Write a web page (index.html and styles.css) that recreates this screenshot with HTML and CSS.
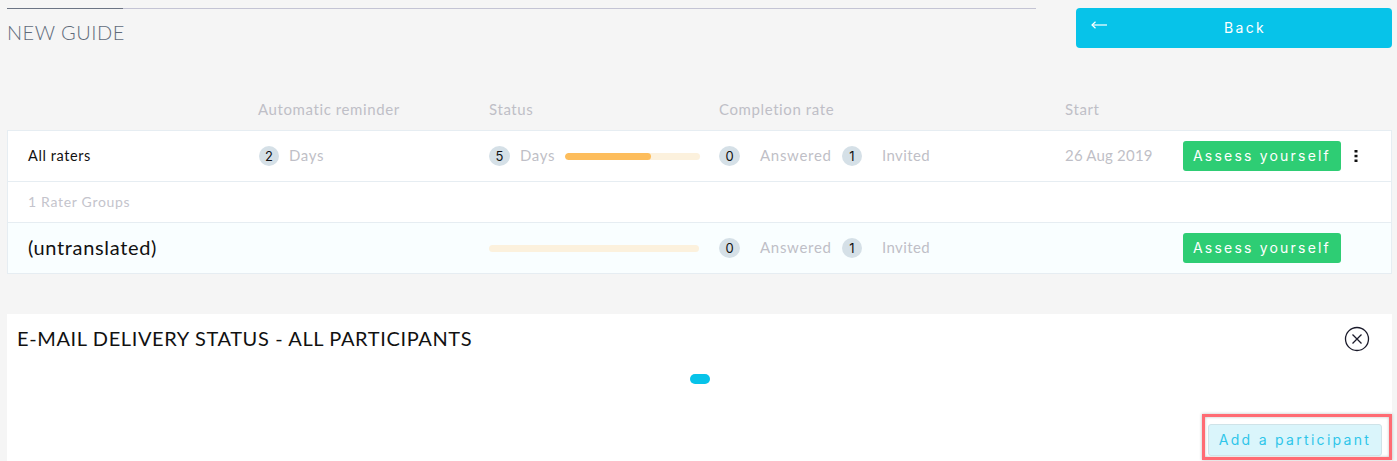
FILE: index.html
```html
<!DOCTYPE html>
<html lang="en">

<head>
  <meta charset="UTF-8" />
  <meta name="viewport" content="width=device-width, initial-scale=1.0" />
  <title>New guide</title>
  <link rel="stylesheet" href="styles.css">
</head>

<body>
  <div class="top-bar">
    <div class="guide-heading">
      <div class="heading-rule"><span class="heading-rule-active"></span></div>
      <h1>NEW GUIDE</h1>
    </div>
    <button class="back-btn">
      <svg class="back-arrow" width="16" height="8" viewBox="0 0 16 8" fill="none" stroke="#fff" stroke-width="1.2">
        <path d="M16 4H1" />
        <path d="M4.5 .7 1 4l3.5 3.300" />
      </svg>
      <span class="back-label">Back</span>
    </button>
  </div>

  <div class="grid-row table-head">
    <span></span>
    <span>Automatic reminder</span>
    <span>Status</span>
    <span>Completion rate</span>
    <span>Start</span>
    <span></span>
  </div>

  <div class="rater-card">
    <div class="grid-row rater-row">
      <span class="rater-name">All raters</span>
      <div class="cell"><span class="count">2</span><span class="muted">Days</span></div>
      <div class="cell">
        <span class="count count-wide">5</span><span class="muted">Days</span>
        <div class="progress progress-short"><div class="progress-fill" style="width: 64%"></div></div>
      </div>
      <div class="cell">
        <span class="count count-wide">0</span><span class="muted answered">Answered</span>
        <span class="count">1</span><span class="muted invited">Invited</span>
      </div>
      <span class="muted start-date">26 Aug 2019</span>
      <div class="cell actions">
        <button class="assess-btn">Assess yourself</button>
        <svg class="more-icon" width="4" height="14" viewBox="0 0 4 14" fill="#111">
          <rect x="0.500" y="1" width="3" height="2.500" />
          <rect x="0.500" y="5.800" width="3" height="2.500" />
          <rect x="0.500" y="10.500" width="3" height="2.500" />
        </svg>
      </div>
    </div>
    <div class="group-count">1 Rater Groups</div>
    <div class="grid-row rater-row group-row">
      <span class="group-name">(untranslated)</span>
      <span></span>
      <div class="progress"></div>
      <div class="cell">
        <span class="count count-wide">0</span><span class="muted answered">Answered</span>
        <span class="count">1</span><span class="muted invited">Invited</span>
      </div>
      <span></span>
      <div class="cell actions">
        <button class="assess-btn">Assess yourself</button>
      </div>
    </div>
  </div>

  <div class="delivery-panel">
    <div class="delivery-head">
      <h2>E-MAIL DELIVERY STATUS - ALL PARTICIPANTS</h2>
      <svg class="close-icon" width="26" height="26" viewBox="0 0 26 26" fill="none" stroke="#1a1a2a" stroke-width="1.300">
        <circle cx="13" cy="13" r="11.500" />
        <path d="M8.500 8.500l9 9M17.500 8.500l-9 9" />
      </svg>
    </div>
    <div class="loading-pill"></div>
    <div class="delivery-foot">
      <div class="highlight-box">
        <button class="add-btn">Add a participant</button>
      </div>
    </div>
  </div>
</body>

</html>
```

FILE: styles.css
```css
html,
body {
  height: 461px;
  overflow: hidden;
}

body {
  margin: 0;
  padding: 0 5px 0 7px;
  background-color: #f5f5f5;
  font-family: "Lato", Arial, sans-serif;
  font-size: 15px;
  color: #111;
}

button {
  border: none;
  padding: 0;
  font-family: "Inter", Arial, sans-serif;
}

.top-bar {
  display: flex;
  justify-content: space-between;
  align-items: flex-start;
  padding-top: 8px;
}

.guide-heading {
  width: 1029px;
}

.heading-rule {
  height: 1px;
  background-color: #c4c4d4;
}

.heading-rule-active {
  display: block;
  width: 116px;
  height: 1px;
  background-color: #6c7484;
}

.guide-heading h1 {
  margin: 11px 0 0;
  font-size: 20px;
  line-height: 24px;
  font-weight: 300;
  letter-spacing: 0.5px;
  color: #5f6b7b;
}

.back-btn {
  display: flex;
  width: 316px;
  height: 40px;
  padding: 13px 9px 0 15px;
  box-sizing: border-box;
  background-color: #07c3e9;
  border-radius: 4px;
  color: #fff;
  font-size: 14px;
  letter-spacing: 2.3px;
}

.back-arrow {
  flex-shrink: 0;
}

.back-label {
  flex: 1;
  text-align: center;
  line-height: 14px;
}

.grid-row {
  display: grid;
  grid-template-columns: 230px 231px 230px 346px 118px 1fr;
  align-items: center;
  padding-left: 20px;
}

.table-head {
  margin-top: 49px;
  padding-left: 21px;
  height: 24px;
  color: #bfbfc7;
  letter-spacing: 0.6px;
}

.rater-card {
  margin-top: 9px;
  background-color: #fff;
  border: 1px solid #e6edf2;
  box-sizing: border-box;
  height: 144px;
}

.rater-row {
  height: 50px;
}

.rater-name {
  padding-bottom: 2px;
  letter-spacing: 0.6px;
  font-size: 14.500px;
}

.cell {
  display: flex;
  align-items: center;
}

.count {
  width: 20px;
  height: 20px;
  margin-left: 1px;
  border-radius: 50%;
  background-color: #d5e0e7;
  font-family: "Inter", Arial, sans-serif;
  font-size: 13px;
  line-height: 20px;
  text-align: center;
  flex-shrink: 0;
}

.count-wide {
  width: 21px;
  margin-left: 0;
}

.muted {
  padding-bottom: 2px;
  color: #bfbfc7;
  letter-spacing: 0.6px;
  white-space: nowrap;
}

.start-date {
  letter-spacing: 0.2px;
}

.count + .muted {
  margin-left: 10px;
}

.count + .answered {
  margin-left: 20px;
  width: 81px;
  letter-spacing: 0.7px;
}

.count + .invited {
  margin-left: 20px;
  letter-spacing: 0.4px;
}

.progress {
  width: 210px;
  height: 7px;
  border-radius: 4px;
  background-color: #fcf1dd;
  overflow: hidden;
}

.progress-short {
  width: 135px;
  margin-left: 10px;
}

.progress-fill {
  height: 100%;
  border-radius: 4px;
  background-color: #fdbd5c;
}

.assess-btn {
  width: 158px;
  height: 30px;
  padding-bottom: 1px;
  background-color: #2ecd74;
  border-radius: 3px;
  color: #fff;
  font-size: 14px;
  letter-spacing: 2.2px;
}

.more-icon {
  margin-left: 13px;
}

.group-count {
  height: 40px;
  padding-left: 20px;
  border-top: 1px solid #e6edf2;
  border-bottom: 1px solid #e6edf2;
  line-height: 40px;
  font-size: 14px;
  letter-spacing: 0.7px;
  color: #c4c4cc;
}

.group-row {
  background-color: #f9feff;
}

.group-name {
  padding-bottom: 2px;
  font-size: 20px;
  letter-spacing: 0.65px;
}

.delivery-panel {
  display: flex;
  flex-direction: column;
  margin-top: 40px;
  height: 147px;
  background-color: #fff;
}

.delivery-head {
  display: flex;
  justify-content: space-between;
  align-items: center;
  padding: 12px 22px 0 10px;
}

.delivery-head h2 {
  margin: 0 0 2px;
  font-size: 20px;
  line-height: 24px;
  font-weight: 400;
  letter-spacing: 0.62px;
  color: #111;
}

.loading-pill {
  width: 20px;
  height: 10px;
  margin: 22px 0 0 683px;
  border-radius: 5px;
  background-color: #07c3e9;
}

.delivery-foot {
  display: flex;
  justify-content: flex-end;
  margin-top: 30px;
}

.highlight-box {
  box-sizing: border-box;
  width: 190px;
  height: 46px;
  padding: 7px 0 0 3px;
  border: 3px solid #ff6b73;
  box-shadow: inset 0 0 3px rgba(0, 0, 0, 0.25), 0 0 3px rgba(0, 0, 0, 0.25);
}

.add-btn {
  display: block;
  width: 174px;
  height: 32px;
  padding-bottom: 2px;
  background-color: #daf5fb;
  border: 1px solid #cfe3e8;
  border-radius: 3px;
  color: #2fc6ea;
  font-size: 14px;
  letter-spacing: 2.3px;
}
```
